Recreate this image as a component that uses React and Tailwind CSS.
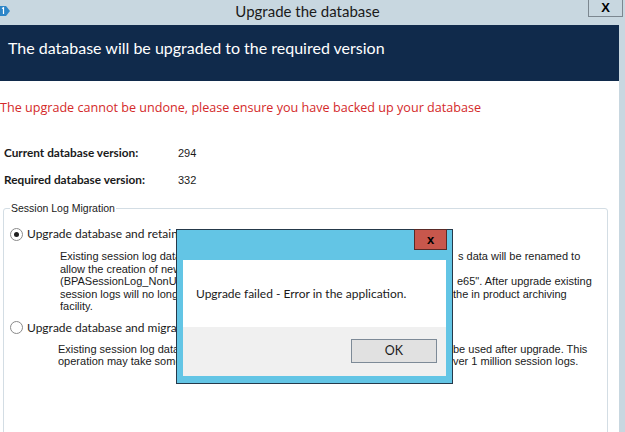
import React from 'react'

// one description line: left part runs under the dialog, right part shows past it
function DescLine({ left, right, pad }) {
  return (
    <div className="flex h-[12.5px] leading-[12.5px]">
      <div className="w-[393px] shrink-0 overflow-hidden whitespace-nowrap">{left}</div>
      <div className={`whitespace-nowrap ${pad}`}>{right}</div>
    </div>
  )
}

function Radio({ checked }) {
  return (
    <span className="w-[13px] h-[13px] rounded-full border border-[#8a8a8a] bg-white flex items-center justify-center shrink-0">
      {checked && <span className="w-[5px] h-[5px] rounded-full bg-[#1f1f1f]" />}
    </span>
  )
}

export default function App() {
  return (
    <div className="relative w-[625px] h-[432px] overflow-hidden bg-white font-['Lato',sans-serif] text-[#1a1a1a]">

      {/* ── Title bar ─────────────────────────────── */}
      <div className="h-[25px] bg-[#c8d7e0] flex items-start">
        <div className="w-[40px] pt-[5px] -ml-[3px]">
          <svg width="14" height="12" viewBox="0 0 14 12">
            <path d="M1 1 L9 1 L13 6 L9 11 L1 11 Z" fill="#2e86c8" />
            <path d="M5 3.5 L6.5 2.8 L6.5 9" stroke="#fff" strokeWidth="1.2" fill="none" />
          </svg>
        </div>
        <div className="flex-1 text-center text-[15px] leading-[23px] text-[#1b1b1b] pr-[10px]">Upgrade the database</div>
        <div className="w-[35px] h-[17px] mr-[2px] border border-t-0 border-[#7c8790] flex items-center justify-center text-[13px] font-bold font-['Liberation_Sans',sans-serif] text-black">
          X
        </div>
      </div>

      <div className="flex h-[407px]">
        <div className="flex-1 flex flex-col overflow-hidden">

          {/* ── Header ─────────────────────────────── */}
          <div className="h-[56px] shrink-0 bg-[#102a4b] px-[8px] pt-[12px] text-white text-[16px] leading-[22px]">
            The database will be upgraded to the required version
          </div>

          {/* ── Body ───────────────────────────────── */}
          <div className="flex-1 flex flex-col text-[12px]">
            <div className="mt-[19px] text-[#d42a2a] text-[12.6px] leading-[16px] font-['Open_Sans',sans-serif]">
              The upgrade cannot be undone, please ensure you have backed up your database
            </div>

            <div className="mt-[29px] pl-[4px] flex flex-col gap-[11px]">
              <div className="flex leading-[16px]">
                <span className="w-[174px] font-bold text-[11.8px]">Current database version:</span>
                <span className="font-['Liberation_Sans',sans-serif] text-[11px]">294</span>
              </div>
              <div className="flex leading-[16px]">
                <span className="w-[174px] font-bold text-[11.8px]">Required database version:</span>
                <span className="font-['Liberation_Sans',sans-serif] text-[11px]">332</span>
              </div>
            </div>

            {/* ── Session Log Migration group ──────── */}
            <div className="mt-[20px] ml-[3px] mr-[11px] h-[240px] shrink-0 border border-[#d3dde4] rounded-[3px]">
              <div className="-mt-[8px] ml-[6px] w-fit px-[1px] bg-white font-['Liberation_Sans',sans-serif] text-[10.5px] leading-[14px]">
                Session Log Migration
              </div>

              <div className="mt-[11px] ml-[6px] flex items-center gap-[4px] leading-[16px]">
                <Radio checked />
                <span>Upgrade database and retain session logs</span>
              </div>
              <div className="mt-[8px] ml-[56px] font-['Liberation_Sans',sans-serif] text-[11px] text-[#1a1a1a]">
                <DescLine left="Existing session log data will be retained, the table containing this data will be renamed to" right="s data will be renamed to" pad="pl-[5px]" />
                <DescLine left="allow the creation of new tables to hold session logs" right="" pad="" />
                <DescLine left="(BPASessionLog_NonUnicode and BPASessionLog_Unicode65&quot;. After upgrade existing" right={'e65". After upgrade existing'} pad="pl-[4px]" />
                <DescLine left="session logs will no longer be visible except through the in product archiving" right="the in product archiving" pad="pl-[0px]" />
                <DescLine left="facility." right="" pad="" />
              </div>

              <div className="mt-[7px] ml-[6px] flex items-center gap-[4px] leading-[16px]">
                <Radio />
                <span>Upgrade database and migrate session logs</span>
              </div>
              <div className="mt-[7px] ml-[54px] font-['Liberation_Sans',sans-serif] text-[11px] text-[#1a1a1a]">
                <DescLine left="Existing session log data will be migrated so that it can be used after upgrade. This" right="be used after upgrade. This" pad="pl-[2px]" />
                <DescLine left="operation may take some time on databases with over 1 million session logs." right="ver 1 million session logs." pad="pl-[2px]" />
              </div>
            </div>
          </div>
        </div>

        {/* window frame, right edge */}
        <div className="w-[6px] bg-[#c8d7e0]" />
      </div>

      {/* ── Error dialog ──────────────────────────── */}
      <div className="absolute left-[176px] top-[229px] w-[277px] h-[155px] bg-[#63c5e5] border border-[#25394a] flex flex-col">
        <div className="h-[30px] flex justify-end">
          <div className="w-[33px] h-[21px] -mt-[1px] mr-[5px] bg-[#c8574c] border border-[#5a2a26] flex items-center justify-center text-[13px] font-bold font-['Liberation_Sans',sans-serif] text-black">
            x
          </div>
        </div>
        <div className="mx-[6px] flex-1 mb-[7px] flex flex-col">
          <div className="h-[67px] bg-white flex items-center pl-[13px] text-[12px] text-[#1a1a1a]">
            Upgrade failed - Error in the application.
          </div>
          <div className="flex-1 bg-[#f0f0f0] flex justify-end items-start pt-[12px] pr-[9px]">
            <div className="w-[86px] h-[24px] bg-[#e1e1e1] border border-[#7d8a97] flex items-center justify-center text-[12.5px] text-[#1a1a1a]">
              OK
            </div>
          </div>
        </div>
      </div>
    </div>
  )
}
